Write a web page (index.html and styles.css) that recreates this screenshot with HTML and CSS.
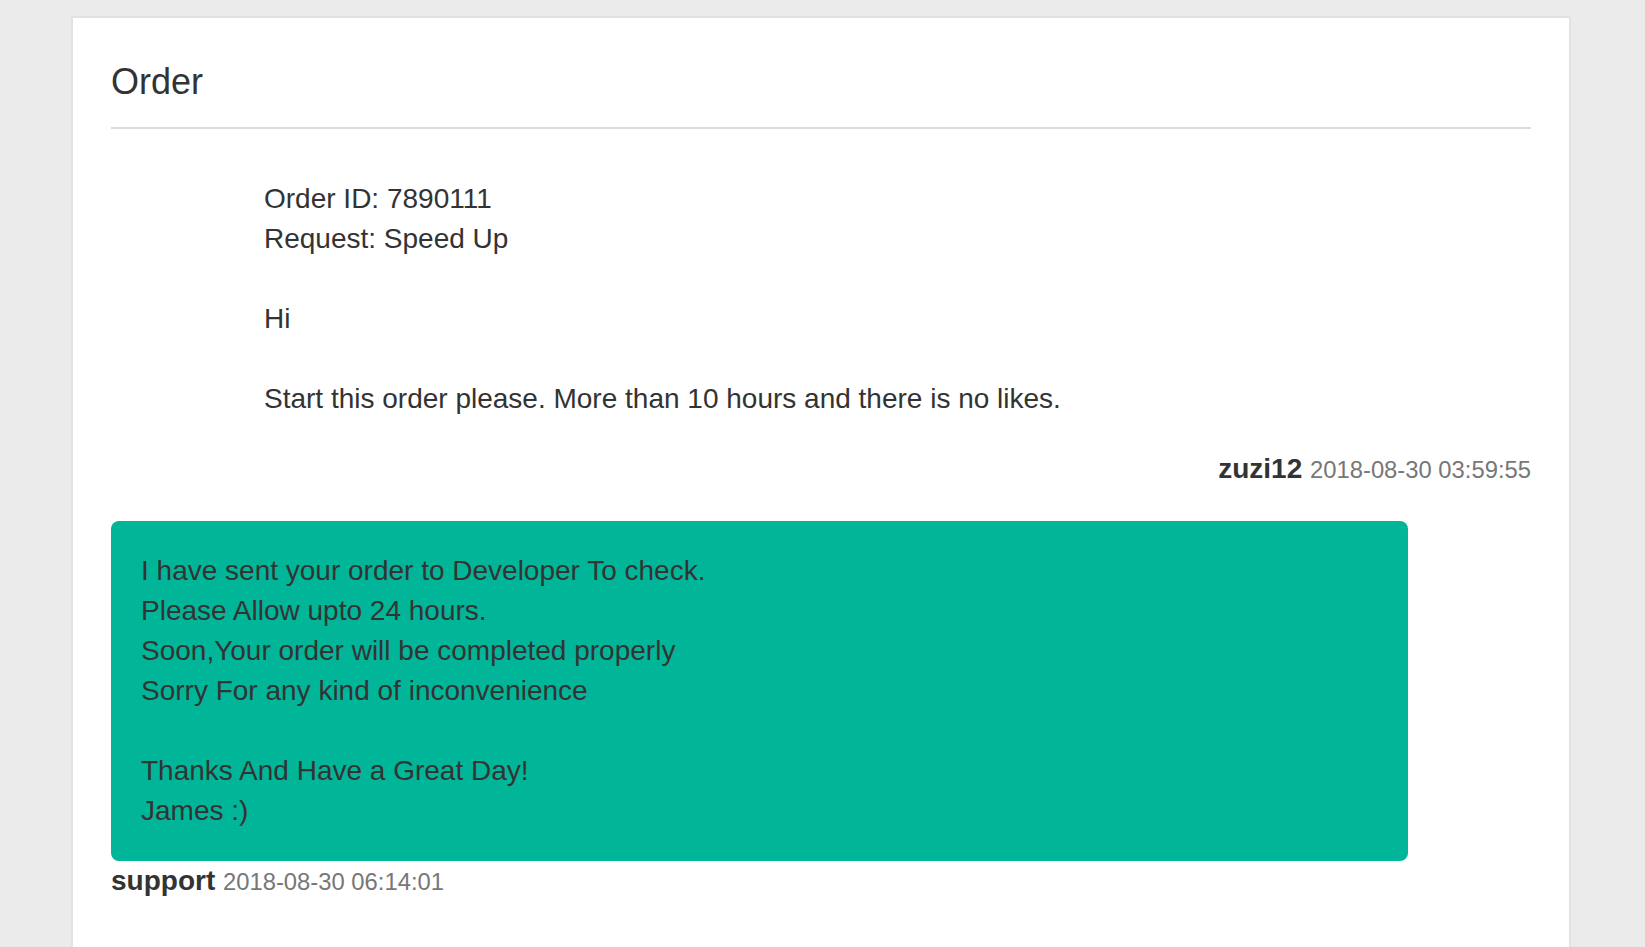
FILE: index.html
```html
<!DOCTYPE html>
<html lang="en">
<head>
<meta charset="utf-8">
<title>Order</title>
<link rel="stylesheet" href="styles.css">
</head>
<body>
<div class="page">
  <div class="card">
    <h3 class="card-title">Order</h3>
    <hr class="divider">
    <div class="thread">
      <div class="msg msg-user">
        <p class="msg-text">Order ID: 7890111<br>Request: Speed Up<br><br>Hi<br><br>Start this order please. More than 10 hours and there is no likes.</p>
      </div>
      <div class="meta meta-right"><strong class="author">zuzi12</strong> <span class="date">2018-08-30 03:59:55</span></div>

      <div class="msg msg-support">
        <p class="msg-text">I have sent your order to Developer To check.<br>Please Allow upto 24 hours.<br>Soon,Your order will be completed properly<br>Sorry For any kind of inconvenience<br><br>Thanks And Have a Great Day!<br>James :)</p>
      </div>
      <div class="meta meta-support"><strong class="author">support</strong> <span class="date">2018-08-30 06:14:01</span></div>
    </div>
  </div>
</div>
</body>
</html>
```

FILE: styles.css
```css
html, body {
  margin: 0;
  padding: 0;
}

body {
  background: #ebebeb;
  font-family: "Liberation Sans", Arial, sans-serif;
  color: #333333;
}

.page {
  padding: 16px 0 0 71px;
}

.card {
  box-sizing: border-box;
  width: 1500px;
  min-height: 1000px;
  background: #ffffff;
  border: 2px solid #e2e2e2;
  padding: 44px 38px 60px;
}

.card-title {
  margin: 0;
  font-size: 36px;
  line-height: 39.6px;
  font-weight: 400;
  color: #333333;
}

.divider {
  height: 0;
  margin: 25px 0 20px;
  border: 0;
  border-top: 2px solid #dddddd;
}

.thread {
  display: flex;
  flex-direction: column;
}

.msg {
  box-sizing: border-box;
  width: 1297px;
  border-radius: 8px;
}

.msg-text {
  margin: 0;
  font-size: 28px;
  line-height: 40px;
}

.msg-user {
  align-self: flex-end;
  padding: 30px 30px 33px;
}

.msg-support {
  align-self: flex-start;
  margin-top: 34px;
  padding: 30px 30px;
  background: #00b598;
}

.meta {
  font-size: 28px;
  line-height: 34px;
}

.meta-right {
  text-align: right;
}

.meta-support {
  margin-top: 3px;
}

.author {
  font-weight: 700;
  color: #333333;
}

.date {
  font-size: 23.8px;
  color: #777777;
}
```
